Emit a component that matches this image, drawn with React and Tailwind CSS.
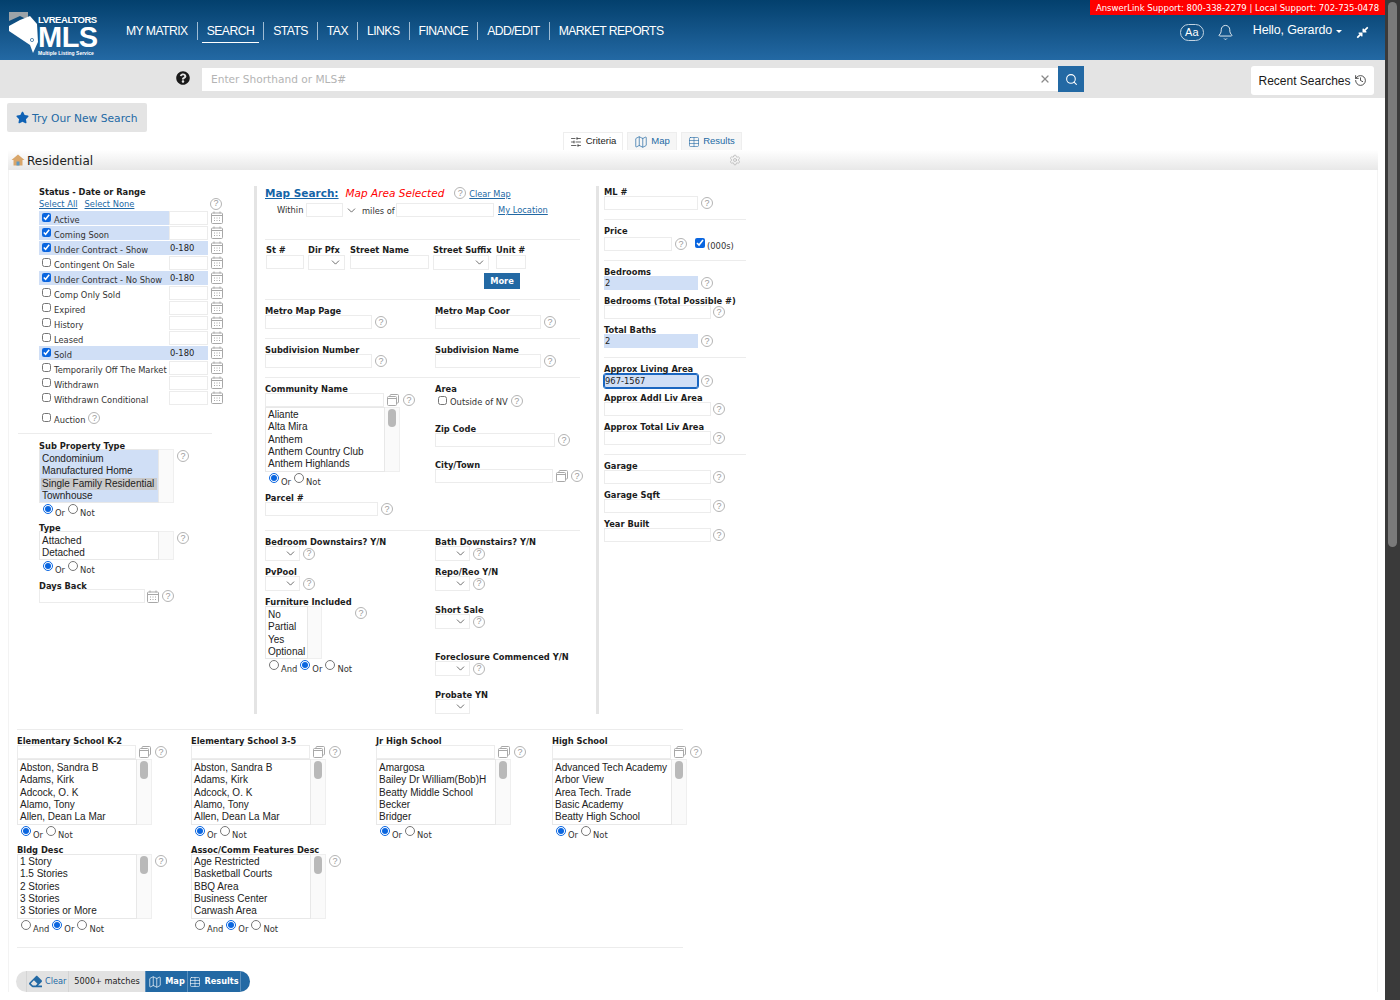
import React from "react";
import { FaStar, FaQuestionCircle, FaCompressAlt, FaEraser } from "react-icons/fa";
import { Bell, History, Search, X, SlidersHorizontal, Map as MapIcon, Table, Settings, ChevronDown } from "lucide-react";

const schoolK = ["Abston, Sandra B", "Adams, Kirk", "Adcock, O. K", "Alamo, Tony", "Allen, Dean La Mar"];
const statuses = [
  ["Active", true, ""],
  ["Coming Soon", true, ""],
  ["Under Contract - Show", true, "0-180"],
  ["Contingent On Sale", false, ""],
  ["Under Contract - No Show", true, "0-180"],
  ["Comp Only Sold", false, ""],
  ["Expired", false, ""],
  ["History", false, ""],
  ["Leased", false, ""],
  ["Sold", true, "0-180"],
  ["Temporarily Off The Market", false, ""],
  ["Withdrawn", false, ""],
  ["Withdrawn Conditional", false, ""],
];
const navItems = ["MY MATRIX", "SEARCH", "STATS", "TAX", "LINKS", "FINANCE", "ADD/EDIT", "MARKET REPORTS"];

const Help = ({ className = "" }) => (
  <span className={`flex h-[12px] w-[12px] shrink-0 items-center justify-center rounded-full border border-[#b4b4b4] font-['Liberation_Sans',sans-serif] text-[9px] leading-none text-[#9a9a9a] ${className}`}>
    ?
  </span>
);

const Cal = ({ className = "" }) => (
  <svg viewBox="0 0 12 13" className={`h-[13px] w-[12px] shrink-0 ${className}`} fill="none" stroke="#a8a8a8" strokeWidth="1">
    <rect x="0.5" y="2" width="11" height="10.5" rx="1" />
    <path d="M0.5 4.5h11M3 0.5v2M9 0.5v2" />
    <path d="M3 7h1M5.5 7h1M8 7h1M3 9.5h1M5.5 9.5h1M8 9.5h1" />
  </svg>
);

const CopyIcon = ({ className = "" }) => (
  <svg viewBox="0 0 12 12" className={`h-[12px] w-[12px] shrink-0 ${className}`} fill="none" stroke="#a8a8a8" strokeWidth="1">
    <path d="M3 2.5V1.5a1 1 0 0 1 1-1h6.5a1 1 0 0 1 1 1V8a1 1 0 0 1-1 1H9.5" />
    <rect x="0.5" y="2.5" width="9" height="9" rx="1" />
    <path d="M0.5 4.5h9" />
  </svg>
);

// h defaults to 9px, some labels sit a little higher or lower above their input
const Label = ({ children, h = "h-[9px]", className = "" }) => (
  <div className={`translate-y-px whitespace-nowrap text-[8.3px] font-bold leading-[9px] text-[#1c1c1c] ${h} ${className}`}>{children}</div>
);

const Input = ({ w, value, tone = "plain" }) => {
  const toneClass = {
    plain: "border border-[#ececec] bg-white",
    filled: "border border-[#d0dff6] bg-[#d0dff6]",
    focus: "rounded-[2px] border border-[#1a66c0] bg-[#d0dff6] outline outline-1 outline-[#1a66c0]",
  }[tone];
  return <div className={`h-[14px] shrink-0 text-[8.4px] leading-[13px] text-[#222] ${toneClass} ${w}`}>{value}</div>;
};

const Select = ({ w = "w-[35px]" }) => (
  <div className={`flex h-[15px] shrink-0 items-center justify-end border border-[#ececec] bg-white pr-[2px] ${w}`}>
    <ChevronDown size={13} strokeWidth={1.2} color="#222" />
  </div>
);

const Sep = ({ w, className = "" }) => <div className={`h-px bg-[#ececec] ${w} ${className}`} />;

const Radios = ({ and = false, className = "" }) => (
  <div className={`flex h-[14px] items-center text-[8.4px] text-[#333] ${className}`}>
    {and && <input type="radio" readOnly checked={false} className="m-0 mr-[2px] h-[10px] w-[10px] -translate-y-[2px]" />}
    {and && <span className="mr-[3px] translate-y-[1.5px]">And</span>}
    <input type="radio" readOnly checked className="m-0 mr-[2px] h-[10px] w-[10px] -translate-y-[2px] accent-[#0a66e0]" />
    <span className="mr-[3px] translate-y-[1.5px]">Or</span>
    <input type="radio" readOnly checked={false} className="m-0 mr-[2px] h-[10px] w-[10px] -translate-y-[2px]" />
    <span className="translate-y-[1.5px]">Not</span>
  </div>
);

const ListBox = ({ items, w, h, gutter = "w-[15px]", thumb = true, selectAll = false, pad = "pt-[2px]", className = "" }) => (
  <div className={`flex shrink-0 overflow-hidden ${h} ${className}`}>
    <div className={`overflow-hidden border border-[#e8e8e8] pl-[2px] font-['Liberation_Sans',sans-serif] text-[10px] leading-[12.25px] text-[#222] ${pad} ${w} ${selectAll ? "bg-[#d0dff6]" : "bg-white"}`}>
      {items.map((item) => (
        <div key={item} className={`whitespace-nowrap ${item === "Single Family Residential" ? "-ml-px mr-[1px] bg-[#c9c9c9] pl-px" : ""}`}>
          {item}
        </div>
      ))}
    </div>
    <div className={`flex justify-center border-y border-r border-[#efefef] bg-[#fafafa] pt-[1px] ${gutter}`}>
      {thumb && <div className="h-[18px] w-[8px] rounded-full bg-[#b9b9b9]" />}
    </div>
  </div>
);

const Field = ({ label, w, value, tone, help = "ml-[3px]", className = "" }) => (
  <div className={className}>
    <Label>{label}</Label>
    <div className="flex items-center">
      <Input w={w} value={value} tone={tone} />
      <Help className={help} />
    </div>
  </div>
);

const SelectField = ({ label, className = "" }) => (
  <div className={className}>
    <Label>{label}</Label>
    <div className="flex items-center">
      <Select />
      <Help className="ml-[3px]" />
    </div>
  </div>
);

const SchoolCol = ({ label, items, w }) => (
  <div className={`shrink-0 ${w}`}>
    <Label>{label}</Label>
    <div className="flex h-[14px] items-center">
      <Input w="w-[119px]" />
      <CopyIcon className="ml-[3px]" />
      <Help className="ml-[4px]" />
    </div>
    <ListBox items={items} w="w-[120px]" h="h-[66px]" />
    <Radios className="ml-[4px] mt-px" />
  </div>
);

const Logo = () => (
  <div className="flex w-[90px] shrink-0 text-white">
    <svg viewBox="0 0 30 42" className="h-[42px] w-[30px] shrink-0">
      <path d="M1 0h19v8L12 4 1 9z" fill="#9ca3a8" />
      <path d="M1 14 L12 8 L22 4 L29 12 L30 30 L25 41 L22 33 L1 19 Z" fill="#fff" />
      <circle cx="24" cy="28" r="1.6" fill="none" stroke="#1c5c8f" strokeWidth="0.7" />
    </svg>
    <div className="flex flex-col font-['Liberation_Sans',sans-serif]">
      <div className="mt-[3px] h-[10px] whitespace-nowrap text-[9.5px] font-bold leading-[10px] tracking-[-0.4px]">LVREALTORS</div>
      <div className="h-[24px] text-[29px] font-bold leading-[24px] tracking-[-0.5px]">MLS</div>
      <div className="mt-[1px] whitespace-nowrap text-[5px] font-bold leading-[6px]">Multiple Listing Service</div>
    </div>
  </div>
);

const Header = () => (
  <div className="flex h-[60px] bg-gradient-to-b from-[#03406d] to-[#2369a4] font-['Liberation_Sans',sans-serif] text-white">
    <div className="ml-[8px] mt-[12px]"><Logo /></div>
    <nav className="ml-[28px] flex h-[60px] items-center text-[12.2px] tracking-[-0.55px]">
      {navItems.map((item, i) => (
        <React.Fragment key={item}>
          {i > 0 && <span className="mx-[9px] mt-[1px] h-[18px] w-px bg-[#9fbcd4]" />}
          <span className="relative mt-[2px] whitespace-nowrap">
            {item}
            {item === "SEARCH" && <span className="absolute -left-[5px] -right-[5px] top-[20px] h-[1.5px] bg-white" />}
          </span>
        </React.Fragment>
      ))}
    </nav>
    <div className="ml-auto flex flex-col items-end">
      <div className="flex h-[15px] w-[295px] items-center justify-center bg-[#ff0000] pt-[1px] font-['DejaVu_Sans',sans-serif] text-[8.5px] leading-none">
        AnswerLink Support: 800-338-2279 | Local Support: 702-735-0478
      </div>
      <div className="mr-[16px] mt-[8px] flex items-center">
        <span className="flex h-[17px] w-[24px] items-center justify-center rounded-full border border-[#c3d4e2] text-[11px]">Aa</span>
        <Bell size={17} strokeWidth={1.2} className="ml-[13px]" />
        <span className="ml-[19px] -translate-y-[2px] text-[12.5px] tracking-[-0.15px]">Hello, Gerardo</span>
        <span className="ml-[4px] h-0 w-0 -translate-y-[1px] border-x-[3px] border-t-[3px] border-x-transparent border-t-white" />
        <FaCompressAlt size={13} className="ml-[14px]" />
      </div>
    </div>
  </div>
);

const SearchBar = () => (
  <div className="flex h-[38px] items-center bg-[#e4e4e4]">
    <FaQuestionCircle size={14} color="#1a1a1a" className="ml-[176px] -translate-y-[1px]" />
    <div className="ml-[12px] flex h-[26px] w-[882px] items-center">
      <div className="flex h-[23px] flex-1 items-center justify-between bg-white pl-[9px] pr-[7px] font-['DejaVu_Sans',sans-serif] text-[10.6px] text-[#b4b4b4]">
        <span className="translate-y-px">Enter Shorthand or MLS#</span>
        <X size={12} strokeWidth={2.5} color="#8a8a8a" />
      </div>
      <div className="flex h-[26px] w-[26px] items-center justify-center bg-[#2369a4]">
        <Search size={13} color="#fff" />
      </div>
    </div>
    <div className="ml-[167px] mt-[3px] flex h-[29px] w-[123px] items-center justify-center gap-[3px] rounded-[3px] bg-white font-['Liberation_Sans',sans-serif] text-[12px] text-[#1a1a1a]">
      Recent Searches <History size={13} strokeWidth={1.4} />
    </div>
  </div>
);

const Tabs = () => (
  <div className="ml-[563px] flex h-[18px] gap-[4px] font-['Liberation_Sans',sans-serif] text-[9.5px]">
    <div className="flex w-[60px] items-center justify-center gap-[4px] border border-b-0 border-[#eeeeee] bg-white text-[#222]">
      <SlidersHorizontal size={12} strokeWidth={1.4} />Criteria
    </div>
    <div className="flex w-[50px] items-center justify-center gap-[3px] border border-b-0 border-[#eeeeee] bg-[#f6f6f6] text-[#2369a4]">
      <MapIcon size={14} strokeWidth={1.2} />Map
    </div>
    <div className="flex w-[61px] items-center justify-center gap-[3px] border border-b-0 border-[#eeeeee] bg-[#f6f6f6] text-[#2369a4]">
      <Table size={12} strokeWidth={1.2} />Results
    </div>
  </div>
);

const StatusColumn = () => (
  <div className="w-[246px] shrink-0 pl-[31px] pt-px">
    <Label h="h-[10px]">Status - Date or Range</Label>
    <div className="flex h-[13px] w-[183px] items-center justify-between">
      <div className="flex gap-[7px] pt-[2px] text-[8.3px] text-[#2369a4] underline">
        <span>Select All</span>
        <span>Select None</span>
      </div>
      <Help />
    </div>
    <div className="mt-px flex flex-col gap-px">
      {statuses.map(([name, checked, range]) => (
        <div key={name} className="flex h-[14px] items-center">
          <div className={`flex h-[14px] w-[130px] items-center pl-[3px] ${checked ? "bg-[#d0dff6]" : ""}`}>
            <input type="checkbox" readOnly checked={checked} className="m-0 h-[9px] w-[9px] shrink-0 -translate-y-[1px] accent-[#0a66e0]" />
            <span className="ml-[3px] translate-y-[1.5px] whitespace-nowrap text-[8.3px] text-[#333]">{name}</span>
          </div>
          <Input w="w-[39px]" value={range} tone={range ? "filled" : "plain"} />
          <Cal className="ml-[3px] -translate-y-px" />
        </div>
      ))}
    </div>
    <div className="ml-[3px] mt-[6px] flex h-[14px] items-center text-[8.3px] text-[#333]">
      <input type="checkbox" readOnly checked={false} className="m-0 h-[9px] w-[9px] -translate-y-px" />
      <span className="ml-[3px] translate-y-[1.5px]">Auction</span>
      <Help className="ml-[3px]" />
    </div>
    <Sep w="w-[194px]" className="-ml-[21px] mt-[8px]" />
    <Label h="h-[8px]" className="mt-[7px]">Sub Property Type</Label>
    <div className="flex">
      <ListBox items={["Condominium", "Manufactured Home", "Single Family Residential", "Townhouse"]} w="w-[120px]" h="h-[54px]" thumb={false} selectAll pad="pt-[3px]" />
      <Help className="ml-[3px] mt-[1px]" />
    </div>
    <Radios className="ml-[4px] mt-px" />
    <Label h="h-[8px]" className="mt-[5px]">Type</Label>
    <div className="flex">
      <ListBox items={["Attached", "Detached"]} w="w-[120px]" h="h-[29px]" thumb={false} pad="pt-[3px]" />
      <Help className="ml-[3px] mt-[1px]" />
    </div>
    <Radios className="ml-[4px] mt-px" />
    <Label h="h-[8px]" className="mt-[6px]">Days Back</Label>
    <div className="flex items-center">
      <Input w="w-[106px]" />
      <Cal className="ml-[2px]" />
      <Help className="ml-[3px]" />
    </div>
  </div>
);

const MapColumn = () => (
  <div className="w-[339px] shrink-0 pl-[8px]">
    <div className="flex h-[14px] items-center whitespace-nowrap">
      <span className="translate-y-px text-[10.5px] font-bold text-[#1565a8] underline">Map Search:</span>
      <span className="ml-[7px] translate-y-px text-[10.5px] italic text-[#ff0000]">Map Area Selected</span>
      <Help className="ml-[10px]" />
      <span className="ml-[3px] mt-[2px] text-[8.2px] text-[#2369a4] underline">Clear Map</span>
    </div>
    <div className="ml-[12px] mt-[3px] flex h-[14px] items-center text-[8.3px] text-[#333]">
      <span className="w-[29px]">Within</span>
      <div className="flex h-[14px] w-[37px] items-center justify-end border border-[#ececec] bg-white" />
      <ChevronDown size={13} strokeWidth={1.2} color="#222" className="ml-[2px]" />
      <span className="ml-[4px] w-[34px] translate-y-px whitespace-nowrap">miles of</span>
      <Input w="w-[98px]" />
      <span className="ml-[4px] text-[#2369a4] underline">My Location</span>
    </div>
    <Sep w="w-[315px]" className="mt-[22px]" />
    <div className="mt-[5px] flex">
      <div className="ml-px w-[42px]"><Label h="h-[10px]">St #</Label><Input w="w-[38px]" /></div>
      <div className="w-[42px]"><Label h="h-[10px]">Dir Pfx</Label><Select w="w-[37px]" /></div>
      <div className="w-[83px]"><Label h="h-[10px]">Street Name</Label><Input w="w-[79px]" /></div>
      <div className="w-[63px]"><Label h="h-[10px]">Street Suffix</Label><Select w="w-[56px]" /></div>
      <div><Label h="h-[10px]">Unit #</Label><Input w="w-[30px]" /></div>
    </div>
    <div className="ml-[219px] mt-[3px] flex h-[16px] w-[36px] items-center justify-center bg-[#2369a4] text-[8.3px] font-bold text-white">More</div>
    <Sep w="w-[315px]" className="mt-[10px]" />
    <div className="mt-[6px] flex">
      <Field label="Metro Map Page" w="w-[107px]" className="w-[170px]" />
      <Field label="Metro Map Coor" w="w-[106px]" />
    </div>
    <Sep w="w-[315px]" className="mt-[9px]" />
    <div className="mt-[6px] flex">
      <Field label="Subdivision Number" w="w-[107px]" className="w-[170px]" />
      <Field label="Subdivision Name" w="w-[106px]" />
    </div>
    <Sep w="w-[315px]" className="mt-[9px]" />
    <div className="flex h-[152px] pt-[6px]">
      <div className="w-[170px]">
        <Label>Community Name</Label>
        <div className="flex h-[14px] items-center">
          <Input w="w-[119px]" />
          <CopyIcon className="ml-[3px]" />
          <Help className="ml-[4px]" />
        </div>
        <ListBox items={["Aliante", "Alta Mira", "Anthem", "Anthem Country Club", "Anthem Highlands"]} w="w-[120px]" h="h-[65px]" pad="pt-[1px]" />
        <Radios className="ml-[4px] mt-px" />
        <Field label="Parcel #" w="w-[113px]" className="mt-[6px]" />
      </div>
      <div>
        <Label>Area</Label>
        <div className="ml-[3px] mt-px flex h-[14px] items-center text-[8.4px] text-[#333]">
          <input type="checkbox" readOnly checked={false} className="m-0 h-[9px] w-[9px] -translate-y-px" />
          <span className="ml-[3px] translate-y-px">Outside of NV</span>
          <Help className="ml-[3px]" />
        </div>
        <Field label="Zip Code" w="w-[120px]" className="mt-[16px]" />
        <div className="mt-[13px]">
          <Label>City/Town</Label>
          <div className="flex h-[14px] items-center">
            <Input w="w-[118px]" />
            <CopyIcon className="ml-[3px]" />
            <Help className="ml-[3px]" />
          </div>
        </div>
      </div>
    </div>
    <Sep w="w-[315px]" />
    <div className="flex pt-[6px]">
      <div className="w-[170px]">
        <SelectField label="Bedroom Downstairs? Y/N" />
        <SelectField label="PvPool" className="mt-[6px]" />
        <Label className="mt-[6px]">Furniture Included</Label>
        <div className="flex">
          <ListBox items={["No", "Partial", "Yes", "Optional"]} w="w-[43px]" h="h-[53px]" thumb={false} gutter="w-[14px]" />
          <Help className="ml-[33px] mt-[1px]" />
        </div>
        <Radios and className="ml-[4px] mt-px" />
      </div>
      <div>
        <SelectField label="Bath Downstairs? Y/N" />
        <SelectField label="Repo/Reo Y/N" className="mt-[6px]" />
        <SelectField label="Short Sale" className="mt-[14px]" />
        <SelectField label="Foreclosure Commenced Y/N" className="mt-[23px]" />
        <div className="mt-[14px]"><Label>Probate YN</Label><Select /></div>
      </div>
    </div>
  </div>
);

const DetailColumn = () => (
  <div className="w-[150px] shrink-0 pl-[5px] pt-px">
    <Field label="ML #" w="w-[94px]" />
    <Sep w="w-[142px]" className="mt-[9px]" />
    <div className="mt-[6px]">
      <Label h="h-[11px]">Price</Label>
      <div className="flex items-center">
        <Input w="w-[68px]" />
        <Help className="ml-[3px]" />
        <input type="checkbox" readOnly checked className="m-0 ml-[8px] h-[10px] w-[10px] -translate-y-[1px] accent-[#0a66e0]" />
        <span className="ml-[2px] translate-y-[1.5px] text-[8.4px] text-[#333]">(000s)</span>
      </div>
    </div>
    <Sep w="w-[142px]" className="mt-[9px]" />
    <Field label="Bedrooms" w="w-[94px]" value="2" tone="filled" className="mt-[6px]" />
    <Field label="Bedrooms (Total Possible #)" w="w-[107px]" help="ml-[2px]" className="mt-[6px]" />
    <Field label="Total Baths" w="w-[94px]" value="2" tone="filled" className="mt-[6px]" />
    <Sep w="w-[142px]" className="mt-[9px]" />
    <div className="mt-[6px]">
      <Label h="h-[10px]">Approx Living Area</Label>
      <div className="flex items-center">
        <Input w="w-[94px]" value="967-1567" tone="focus" />
        <Help className="ml-[3px]" />
      </div>
    </div>
    <Field label="Approx Addl Liv Area" w="w-[107px]" help="ml-[2px]" className="mt-[5px]" />
    <Field label="Approx Total Liv Area" w="w-[107px]" help="ml-[2px]" className="mt-[6px]" />
    <Sep w="w-[142px]" className="mt-[9px]" />
    <Field label="Garage" w="w-[107px]" help="ml-[2px]" className="mt-[6px]" />
    <Field label="Garage Sqft" w="w-[107px]" help="ml-[2px]" className="mt-[6px]" />
    <Field label="Year Built" w="w-[107px]" help="ml-[2px]" className="mt-[6px]" />
  </div>
);

const Footer = () => (
  <div className="ml-[7px] mt-[23px] flex h-[21px] w-[234px] overflow-hidden rounded-full bg-[#e2e2e2] text-[8.2px]">
    <div className="ml-[10px] flex w-[43px] items-center gap-[3px] border-x border-[#d4d4d4] pl-[2px] text-[#2369a4]">
      <FaEraser size={13} />Clear
    </div>
    <div className="flex w-[76px] items-center justify-center text-[#222]">5000+ matches</div>
    <div className="flex flex-1 bg-[#2369a4] font-bold text-white">
      <div className="flex w-[43px] items-center justify-center gap-[3px] border-x border-[#5a8fbd]">
        <MapIcon size={14} strokeWidth={1.2} />Map
      </div>
      <div className="flex w-[53px] items-center justify-center gap-[3px] border-r border-[#5a8fbd]">
        <Table size={12} strokeWidth={1.2} />Results
      </div>
    </div>
  </div>
);

export default function App() {
  return (
    <div className="flex h-[1000px] w-[1400px] overflow-hidden bg-white font-['DejaVu_Sans',sans-serif]">
      <div className="w-[1385px] shrink-0">
        <Header />
        <SearchBar />
        <div className="ml-[7px] mt-[5px] flex h-[29px] w-[140px] items-center rounded-[2px] bg-[#e4e4e4] pl-[9px] text-[10.7px] text-[#2369a4]">
          <FaStar size={13} color="#0f62b5" />
          <span className="ml-[3px] translate-y-[1.5px]">Try Our New Search</span>
        </div>
        <Tabs />
        <div className="ml-[8px] flex h-[20px] w-[1370px] items-center bg-gradient-to-b from-white to-[#e8e8e8]">
          <svg viewBox="0 0 14 12" className="ml-[3px] h-[12px] w-[14px]">
            <path d="M7 0.5 L0.5 6 H2.5 V11.5 H11.5 V6 H13.5 Z" fill="#d9a66a" />
            <path d="M5.5 11.5 V7.5 H8.5 V11.5 Z" fill="#5f9ac4" />
          </svg>
          <span className="ml-[2px] translate-y-px text-[12px] text-[#222]">Residential</span>
          <Settings size={12} strokeWidth={1.2} color="#a8a8a8" className="ml-[636px]" />
        </div>
        <div className="ml-[8px] w-[1370px] border-x border-[#f3f3f3] pt-[16px]">
          <div className="-ml-px flex h-[528px]">
            <StatusColumn />
            <div className="w-[3px] shrink-0 bg-[#e4e4e4]" />
            <MapColumn />
            <div className="w-[3px] shrink-0 bg-[#e4e4e4]" />
            <DetailColumn />
          </div>
          <Sep w="w-[666px]" className="ml-[8px] mt-[15px]" />
          <div className="ml-[8px] mt-[6px] flex">
            <SchoolCol label="Elementary School K-2" items={schoolK} w="w-[174px]" />
            <SchoolCol label="Elementary School 3-5" items={schoolK} w="w-[185px]" />
            <SchoolCol label="Jr High School" items={["Amargosa", "Bailey Dr William(Bob)H", "Beatty Middle School", "Becker", "Bridger"]} w="w-[176px]" />
            <SchoolCol label="High School" items={["Advanced Tech Academy", "Arbor View", "Area Tech. Trade", "Basic Academy", "Beatty High School"]} w="w-[136px]" />
          </div>
          <div className="ml-[8px] mt-[5px] flex">
            <div className="w-[174px]">
              <Label>Bldg Desc</Label>
              <div className="flex">
                <ListBox items={["1 Story", "1.5 Stories", "2 Stories", "3 Stories", "3 Stories or More"]} w="w-[120px]" h="h-[65px]" pad="pt-[1px]" />
                <Help className="ml-[3px] mt-[1px]" />
              </div>
              <Radios and className="ml-[4px] mt-px" />
            </div>
            <div>
              <Label>Assoc/Comm Features Desc</Label>
              <div className="flex">
                <ListBox items={["Age Restricted", "Basketball Courts", "BBQ Area", "Business Center", "Carwash Area"]} w="w-[120px]" h="h-[65px]" pad="pt-[1px]" />
                <Help className="ml-[3px] mt-[1px]" />
              </div>
              <Radios and className="ml-[4px] mt-px" />
            </div>
          </div>
          <Sep w="w-[666px]" className="ml-[8px] mt-[13px]" />
          <Footer />
        </div>
      </div>
      {/* browser scrollbar */}
      <div className="flex w-[15px] shrink-0 justify-center bg-[#3a3a3a] pt-[2px]">
        <div className="h-[545px] w-[9px] rounded-full bg-[#7a7a7a]" />
      </div>
    </div>
  );
}
